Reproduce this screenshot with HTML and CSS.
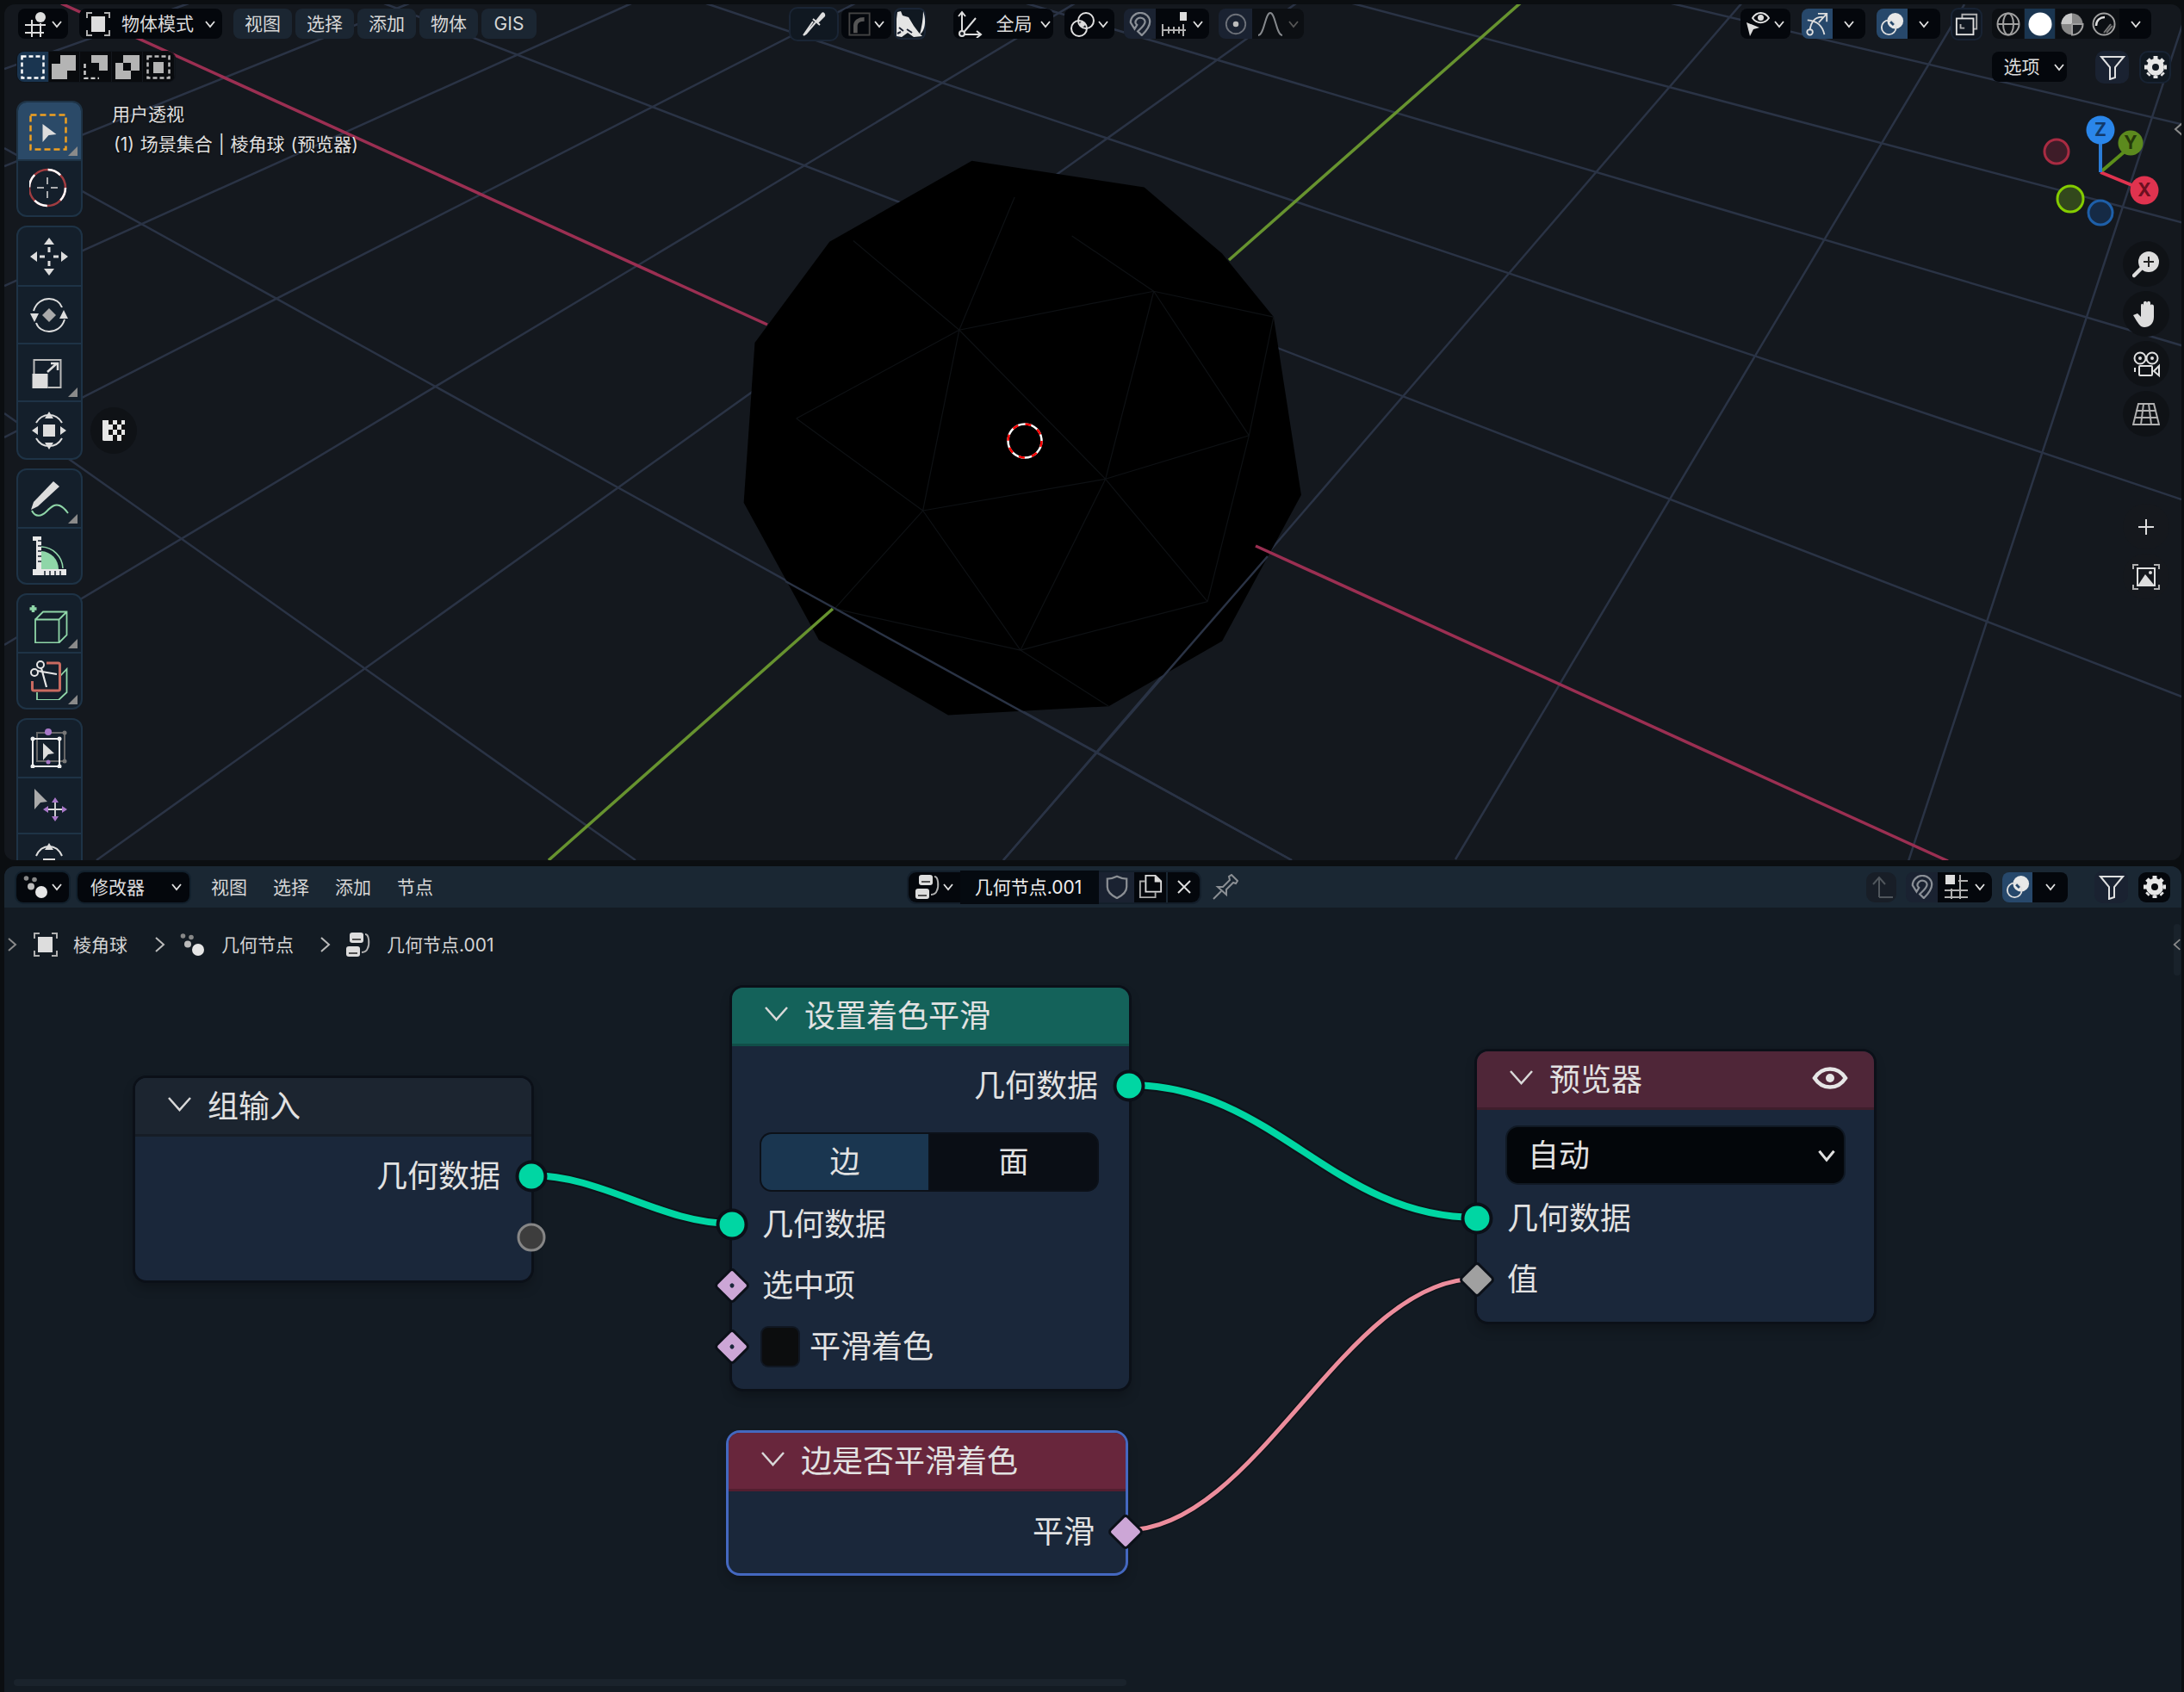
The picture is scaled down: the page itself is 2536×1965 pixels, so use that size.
FILE: index.html
```html
<!DOCTYPE html>
<html lang="zh">
<head>
<meta charset="utf-8">
<title>Blender</title>
<link rel="stylesheet" href="styles.css">
</head>
<body>
<div class="app">

<section class="viewport">
  <svg class="scene" viewBox="5 5 2528 994">
    <g class="grid">
      <path d="M5 80L219 4M5 193L475 4M5 332L733 4M5 508L993 4M5 749L1248 4M112 999L1505 4M1165 999L2023 3M1690 998L2281 5M2216 1000L2536 23"/>
      <path d="M446 4L2536 810M820 4L2536 581M1192 4L2536 402M1567 3L2536 259M1937 3L2536 145M5 172L1500 999M5 480L738 999"/>
    </g>
    <path class="axis-r" d="M71 4L891 377"/>
    <path class="axis-g" d="M1766 3L1427 302"/>
    <g transform="translate(820,150) scale(.4591)">
      <path class="ball" d="M672 80L1108 147L1305 315L1435 475L1505 925L1305 1295L1018 1460L612 1482L285 1292L95 945L123 540L312 285Z"/>
      <path class="facets" d="M372 282L640 508M780 172L640 508M640 508L1132 410M640 508L548 965M640 508L228 732M640 508L1010 885M1132 410L1010 885M1132 410L1435 475M1132 410L1373 775M1132 410L925 270M1010 885L548 965M1010 885L1373 775M1010 885L1268 1195M1010 885L795 1318M548 965L228 732M548 965L795 1318M548 965L325 1213M325 1213L795 1318M795 1318L1268 1195M795 1318L1018 1460M1373 775L1435 475M1373 775L1268 1195"/>
    </g>
    <path class="axis-r" d="M1458 634L2262 1000"/>
    <path class="axis-g" d="M967 707L637 999"/>
    <g class="grid"><path d="M1165 999L1472 646M912 675L1500 999"/></g>
    <circle class="cur-w" cx="1190" cy="512" r="19.5"/>
    <circle class="cur-r" cx="1190" cy="512" r="19.5"/>
  </svg>

  <header class="vp-row vp-top">
    <div class="seg w58"><button class="b dark"><svg class="i30" viewBox="0 0 30 30"><circle cx="20" cy="7" r="6" fill="#ddd"/><path d="M2 16H26M2 25H24M10 10V30M20 14V30" class="st2"/></svg><svg class="chev" viewBox="0 0 14 14"><path d="M2 4L7 10L12 4"/></svg></button></div>
    <div class="seg w166 ml13"><button class="b dark gap12"><svg class="i30" viewBox="0 0 30 30"><path d="M2 8V2H8M22 2H28V8M2 22V28H8M22 28H28V22" class="st2g"/><rect x="7" y="6" width="16" height="18" fill="#ddd"/></svg><span>物体模式</span><svg class="chev" viewBox="0 0 14 14"><path d="M2 4L7 10L12 4"/></svg></button></div>
    <nav class="menus ml13">
      <button class="menu w68">视图</button><button class="menu w68">选择</button><button class="menu w68">添加</button><button class="menu w68">物体</button><button class="menu w64">GIS</button>
    </nav>

    <div class="center-a">
      <button class="frame w58"><svg class="i30" viewBox="0 0 30 30"><path d="M17 11L24 2C26 0 29 3 28 6L20 14Z" fill="#ddd"/><path d="M14 9L22 16M17 13L6 26L3 28L5 25L14 12" class="st2"/></svg></button>
      <div class="seg w58 ml3"><button class="b dark"><svg class="i28" viewBox="0 0 28 30"><rect x="1.5" y="1.5" width="25" height="27" fill="none" stroke="#444" stroke-width="2"/><path d="M9 26V17C9 12 13 9 20 9" fill="none" stroke="#555" stroke-width="5"/></svg><svg class="chev" viewBox="0 0 14 14"><path d="M2 4L7 10L12 4"/></svg></button></div>
      <button class="frame2 w37 ml3"><svg class="i36" viewBox="0 0 36 32"><path d="M33 1C37 12 35 24 29 28C31 20 33 10 33 1Z" fill="#e8e8e8"/><path d="M3 2L7 1L9 6L16 8L22 18L28 26L32 30L22 31L15 26L8 31L2 30V10Z" fill="#e4e4e4"/><path d="M5 20L10 24M3 27L7 25M14 22L20 26" stroke="#1a2030" stroke-width="2" fill="none"/></svg></button>

      <div class="seg w116 ml32"><button class="b dark gap8"><svg class="i32 mr7" viewBox="0 0 32 32"><path d="M7 28V3M3 7L7 2L11 7M7 28H28M24 24L29 28L24 32M7 28L23 9" class="st2"/><circle cx="7" cy="27" r="3" fill="#14181e" stroke="#ddd" stroke-width="2"/></svg><span>全局</span><svg class="chev" viewBox="0 0 14 14"><path d="M2 4L7 10L12 4"/></svg></button></div>
      <div class="seg w58 ml13"><button class="b dark"><svg class="i30" viewBox="0 0 30 30"><circle cx="19" cy="11" r="9" class="st2n"/><circle cx="11" cy="20" r="9" class="st2n"/><circle cx="15" cy="15" r="3" fill="#ddd"/></svg><svg class="chev" viewBox="0 0 14 14"><path d="M2 4L7 10L12 4"/></svg></button></div>
      <div class="seg ml11">
        <button class="b slate w37"><svg class="i28" viewBox="0 0 30 30"><path d="M3 13C3 6 9 1 15 1C22 1 27 6 27 12C27 18 22 24 17 29L12 24C16 20 21 16 21 12C21 9 18 7 15 7C12 7 9 10 9 13C9 14 10 15 11 16L8 21Z" fill="none" stroke="#8a8f96" stroke-width="2.4"/></svg></button>
        <button class="b dark w62 gap5"><svg class="i30" viewBox="0 0 30 30"><rect x="21" y="1" width="8" height="10" fill="#ddd"/><path d="M1 15V29M25 15V29M1 22H28M8 18V26M14 18V26M20 18V26" class="st2g"/></svg><svg class="chev" viewBox="0 0 14 14"><path d="M2 4L7 10L12 4"/></svg></button>
      </div>
      <div class="seg ml11">
        <button class="b slate w39"><svg class="i28" viewBox="0 0 28 30"><circle cx="14" cy="15" r="12" fill="none" stroke="#6c7078" stroke-width="2"/><circle cx="14" cy="15" r="3.5" fill="#bbb"/></svg></button>
        <button class="b dim w60 gap5"><svg class="i30" viewBox="0 0 30 30"><path d="M1 28C8 28 9 2 15 2C21 2 22 28 29 28" fill="none" stroke="#85888c" stroke-width="2"/></svg><svg class="chev faint" viewBox="0 0 14 14"><path d="M2 4L7 10L12 4"/></svg></button>
      </div>
    </div>

    <div class="right-a">
      <div class="seg w58"><button class="b dark"><svg class="i30" viewBox="0 0 30 30"><path d="M8 8C13 0 22 0 27 8C22 15 13 15 8 8Z" class="st2n"/><circle cx="17.500" cy="7.500" r="3.500" fill="#ddd"/><path d="M1 13L16 19L9 21L5 29Z" fill="#ddd"/></svg><svg class="chev" viewBox="0 0 14 14"><path d="M2 4L7 10L12 4"/></svg></button></div>
      <div class="seg ml13">
        <button class="b on w36"><svg class="i28" viewBox="0 0 30 30"><path d="M6 23C7 13 12 6 22 6M16 2H27V12M27 2L17 13M24 28C22 18 16 11 3 10" class="st2"/><circle cx="6" cy="25" r="3.500" class="st2n"/></svg></button>
        <button class="b dark w38"><svg class="chev" viewBox="0 0 14 14"><path d="M2 4L7 10L12 4"/></svg></button>
      </div>
      <div class="seg ml13">
        <button class="b on w36"><svg class="i28" viewBox="0 0 30 30"><circle cx="19" cy="11" r="10" fill="#e8e8e8"/><circle cx="11" cy="19" r="9" fill="none" stroke="#e0e0e0" stroke-width="2"/><path d="M13 12L17 16" stroke="#27486b" stroke-width="3"/></svg></button>
        <button class="b dark w38"><svg class="chev" viewBox="0 0 14 14"><path d="M2 4L7 10L12 4"/></svg></button>
      </div>
      <button class="frame-t w37 ml12"><svg class="i28" viewBox="0 0 30 30"><path d="M9 8V3H27V21H23" class="st2g"/><rect x="2" y="8" width="21" height="20" class="st2n"/><path d="M7 15V20H12" class="st2g"/></svg></button>
      <div class="seg ml11">
        <button class="b dim w37"><svg class="i28" viewBox="0 0 28 28"><circle cx="14" cy="14" r="12.500" fill="none" stroke="#a0a0a0" stroke-width="2"/><ellipse cx="14" cy="14" rx="6" ry="12.500" fill="none" stroke="#a0a0a0" stroke-width="2"/><path d="M2 14H26" stroke="#a0a0a0" stroke-width="2"/></svg></button>
        <button class="b blue w35 sp1"><svg class="i28" viewBox="0 0 28 28"><circle cx="14" cy="14" r="13.500" fill="#fff"/></svg></button>
        <button class="b dim w37"><svg class="i28" viewBox="0 0 28 28"><circle cx="14" cy="14" r="12.500" fill="#888"/><path d="M14 1.500A12.500 12.500 0 0 0 1.500 14H14Z" fill="#c8c8c8"/><path d="M14 14V26.500A12.500 12.500 0 0 0 26.500 14Z" fill="#191c20" stroke="#a0a0a0" stroke-width="2"/></svg></button>
        <button class="b dim w37"><svg class="i28" viewBox="0 0 28 28"><circle cx="14" cy="14" r="12.500" fill="none" stroke="#a0a0a0" stroke-width="2"/><path d="M5 16C5 9 10 6 15 6" fill="none" stroke="#ddd" stroke-width="2.500"/><path d="M17 24L24 16M14 24L22 14" stroke="#777" stroke-width="2"/></svg></button>
        <button class="b dark w37"><svg class="chev" viewBox="0 0 14 14"><path d="M2 4L7 10L12 4"/></svg></button>
      </div>
    </div>
  </header>

  <div class="vp-row vp-second">
    <div class="seg modes">
      <button class="b mode sel"><svg class="i28" viewBox="0 0 28 28"><rect x="1.500" y="1.500" width="25" height="25" fill="none" stroke="#fff" stroke-width="2.500" stroke-dasharray="5 3"/></svg></button>
      <button class="b mode"><svg class="i28" viewBox="0 0 28 28"><path d="M10 0H28V18H18V28H0V10H10Z" fill="#b4b4b4"/></svg></button>
      <button class="b mode"><svg class="i28" viewBox="0 0 28 28"><path d="M9 0H28V18H18V9H9Z" fill="#b4b4b4"/><path d="M1.500 10V27H18" fill="none" stroke="#ccc" stroke-width="2.500" stroke-dasharray="5 3"/></svg></button>
      <button class="b mode"><svg class="i28" viewBox="0 0 28 28"><path d="M9 0H28V18H18V9H9Z" fill="#b4b4b4"/><path d="M0 9H9V18H18V28H0Z" fill="#b4b4b4"/></svg></button>
      <button class="b mode"><svg class="i28" viewBox="0 0 28 28"><rect x="1.500" y="1.500" width="25" height="25" fill="none" stroke="#bbb" stroke-width="2.500" stroke-dasharray="5 3"/><rect x="8" y="8" width="12" height="13" fill="#b4b4b4"/></svg></button>
    </div>
    <div class="vp-second-right">
      <div class="seg w87"><button class="b dark gap15 opts"><span>选项</span><svg class="chev" viewBox="0 0 14 14"><path d="M2 4L7 10L12 4"/></svg></button></div>
      <button class="square slate-sq w39 ml33"><svg class="i30" viewBox="0 0 30 30"><path d="M2 3H28L18 15V27L12 29V15Z" class="st2n"/></svg></button>
      <button class="square frame-d w37 ml12"><svg class="i30" viewBox="0 0 30 30"><circle cx="15" cy="15" r="7" fill="none" stroke="#e6e6e6" stroke-width="6"/><path d="M15 2V28M2 15H28M6 6L24 24M24 6L6 24" stroke="#e6e6e6" stroke-width="5" stroke-dasharray="5 18" stroke-dashoffset="0"/></svg></button>
    </div>
  </div>

  <aside class="tools">
    <div class="tgroup">
      <button class="cell active corner"><svg class="i46" viewBox="0 0 46 46"><rect x="1.500" y="4.500" width="41" height="40" fill="none" stroke="#f0a020" stroke-width="2.500" stroke-dasharray="7 4"/><path d="M15.500 15L31.500 27L22.500 28L15.500 36Z" fill="#ddd"/></svg></button>
      <button class="cell"><svg class="i46" viewBox="0 0 46 46"><circle cx="21" cy="23" r="21" fill="none" stroke="#a03c40" stroke-width="2.500"/><circle cx="21" cy="23" r="21" fill="none" stroke="#fff" stroke-width="2.500" stroke-dasharray="16 17"/><path d="M21 11V19M21 27V35M9 23H17M25 23H33" stroke="#ddd" stroke-width="1.500"/></svg></button>
    </div>
    <div class="tgroup">
      <button class="cell tall"><svg class="i46" viewBox="0 0 46 46"><path d="M23 1L29 9H17ZM23 45L29 37H17ZM1 23L9 17V29ZM45 23L37 17V29Z" fill="#ddd"/><path d="M23 12V18M23 28V34M12 23H18M28 23H34" stroke="#ddd" stroke-width="3"/></svg></button>
      <button class="cell tall"><svg class="i46" viewBox="0 0 46 46"><path d="M23 15L31 23L23 31L15 23Z" fill="#aaa"/><path d="M5 18C8 8 16 4 23 4C30 4 36 8 38 14M41 28C38 38 30 42 23 42C16 42 10 38 8 32" fill="none" stroke="#ddd" stroke-width="2"/><path d="M1 21H11L6 31ZM45 27H35L40 17Z" fill="#ddd"/></svg></button>
      <button class="cell tall corner"><svg class="i46" viewBox="0 0 46 46"><path d="M5.500 24V8H36.500V40H21.500" fill="none" stroke="#bbb" stroke-width="2"/><rect x="3.500" y="24" width="18" height="17" fill="#ddd"/><path d="M21 22L32 12M25 12H33V20" fill="none" stroke="#ddd" stroke-width="2.500"/></svg></button>
      <button class="cell tall"><svg class="i46" viewBox="0 0 46 46"><rect x="16" y="16" width="14" height="14" fill="#ddd"/><path d="M8 14C12 7 17 5 23 5C29 5 34 7 38 14M8 32C12 39 17 41 23 41C29 41 34 39 38 32" fill="none" stroke="#ddd" stroke-width="2"/><path d="M23 1L28 9H18ZM23 45L28 37H18ZM3 23L10 18V28ZM43 23L36 18V28Z" fill="#ddd"/></svg></button>
    </div>
    <div class="tgroup">
      <button class="cell corner"><svg class="i46" viewBox="0 0 46 46"><path d="M28 3L35 9L10 32L2 36L5 27Z" fill="#ddd"/><path d="M3 37C7 45 14 44 20 38C26 32 30 29 35 31C40 33 42 36 45 40" fill="none" stroke="#8fd6a8" stroke-width="2"/></svg></button>
      <button class="cell"><svg class="i46" viewBox="0 0 46 46"><path d="M14 18A21 21 0 0 1 34 39H14Z" fill="#8fd6a8"/><path d="M14 13A26 26 0 0 1 39 38" fill="none" stroke="#8fd6a8" stroke-width="1.500"/><path d="M4 1H14V39H43V46H4V39H8V6H4Z" fill="#e8e8e8"/><path d="M14 6H10M14 12H10M14 18H10M14 24H10M14 30H10M18 46V41M24 46V41M30 46V41M36 46V41" stroke="#141f2b" stroke-width="1.500"/></svg></button>
    </div>
    <div class="tgroup">
      <button class="cell corner"><svg class="i46" viewBox="0 0 46 46"><path d="M4.500 2V10M0.500 6H8.500" stroke="#8fd6a8" stroke-width="3.500"/><path d="M7 18.500H34.500V45.500H7ZM7 18.500L16 9.500H43.500V36.500L34.500 45.500M34.500 18.500L43.500 9.500" fill="none" stroke="#8fd6a8" stroke-width="1.800"/></svg></button>
      <button class="cell corner"><svg class="i46" viewBox="0 0 46 46"><path d="M36 18L43.500 10V37L34 46H9V37" fill="none" stroke="#8fd6a8" stroke-width="1.800"/><rect x="3.500" y="3" width="32" height="32" rx="2" fill="none" stroke="#c96a60" stroke-width="3"/><rect x="0" y="0" width="20" height="24" fill="#141f2b"/><circle cx="6" cy="14" r="4" fill="none" stroke="#e6e6e6" stroke-width="2"/><circle cx="13" cy="5" r="4" fill="none" stroke="#e6e6e6" stroke-width="2"/><path d="M9 12L32 16M14 9L20 31" stroke="#e6e6e6" stroke-width="2.200"/></svg></button>
    </div>
    <div class="tgroup cut">
      <button class="cell"><svg class="i46" viewBox="0 0 46 46"><path d="M9 5H41V38H9Z" fill="none" stroke="#666" stroke-width="2"/><path d="M4 12H35V44H4Z" fill="none" stroke="#eee" stroke-width="2"/><circle cx="22" cy="4" r="4" fill="#a878c8"/><circle cx="22" cy="39" r="2.500" fill="#a878c8"/><circle cx="4" cy="12" r="2.500" fill="#eee"/><circle cx="35" cy="12" r="2.500" fill="#eee"/><circle cx="4" cy="44" r="2.500" fill="#eee"/><circle cx="35" cy="44" r="2.500" fill="#eee"/><circle cx="41" cy="5" r="2.500" fill="#777"/><circle cx="41" cy="38" r="2.500" fill="#777"/><path d="M16 17L29 29L22 30L16 37Z" fill="#ddd"/></svg></button>
      <button class="cell"><svg class="i46" viewBox="0 0 46 46"><path d="M6 4L21 19L13 20L6 28Z" fill="#aaa"/><path d="M30 14L34 20H26ZM30 42L34 36H26ZM16 28L22 24V32ZM44 28L38 24V32Z" fill="#a878c8"/><path d="M30 20V36M22 28H38" stroke="#ddd" stroke-width="1.800"/></svg></button>
      <button class="cell"><svg class="i46" viewBox="0 0 46 46"><rect x="16" y="19" width="14" height="6" fill="#ddd"/><path d="M8 16C12 7 17 5 23 5C29 5 34 7 38 16" fill="none" stroke="#ddd" stroke-width="2"/><path d="M23 1L28 9H18Z" fill="#ddd"/></svg></button>
    </div>
  </aside>

  <div class="info">
    <p>用户透视</p>
    <p class="info2">(1) 场景集合 | 棱角球 (预览器)</p>
  </div>

  <button class="float checker"><svg class="i28" viewBox="0 0 28 26"><path d="M1 1H27V25H3C1 25 1 24 1 23Z" fill="#e6e6e6"/><path d="M8 1H13V6H8ZM18 1H23V6H18ZM13 6H18V12H13ZM23 6H27V12H23ZM8 12H13V18H8ZM18 12H23V18H18ZM13 18H18V25H13ZM23 18H27V25H23Z" fill="#111"/></svg></button>

  <svg class="gizmo" viewBox="2365 130 150 140">
    <circle cx="2388" cy="176" r="14" fill="#3e1c28" stroke="#a82b42" stroke-width="3"/>
    <circle cx="2404" cy="231" r="15" fill="#32481c" stroke="#84cc00" stroke-width="3"/>
    <circle cx="2439" cy="247" r="14" fill="#152a45" stroke="#1e5fa8" stroke-width="3"/>
    <path d="M2439 200L2474 170" stroke="#5c8f1a" stroke-width="4"/>
    <path d="M2439 200L2490 221" stroke="#e0334f" stroke-width="4"/>
    <path d="M2439 200V155" stroke="#2a7bd6" stroke-width="4"/>
    <circle cx="2439" cy="151" r="16.500" fill="#2a86ea"/>
    <circle cx="2474" cy="166" r="14.500" fill="#5c8a1e"/>
    <circle cx="2490" cy="221" r="16.500" fill="#e0334f"/>
    <text class="gz" x="2439" y="158" fill="#123a6a">Z</text>
    <text class="gz" x="2474" y="173" fill="#24380a">Y</text>
    <text class="gz" x="2490" y="228" fill="#6c0f20">X</text>
  </svg>

  <svg class="side-arrow sa-top" viewBox="0 0 12 18"><path d="M10 2L2 9L10 16"/></svg>

  <div class="navs">
    <div class="nav-group">
      <button class="float nav"><svg class="i32" viewBox="0 0 32 32"><circle cx="19" cy="13" r="12" fill="#ddd"/><path d="M19 7V19M13 13H25" stroke="#222" stroke-width="2"/><path d="M10 21L2 29" stroke="#ddd" stroke-width="4.500" stroke-linecap="round"/></svg></button>
      <button class="float nav"><svg class="i32" viewBox="0 0 32 32"><path d="M1 17L6 15L10 19V6C10 3 13 3 13 6V3C13 0 17 0 17 3V3C17 0 21 0 21 3V6C21 4 25 4 25 7V19C25 27 20 31 14 31C9 31 7 27 1 17Z" fill="#ddd"/></svg></button>
      <button class="float nav"><svg class="i32" viewBox="0 0 32 32"><circle cx="9" cy="9" r="6.500" class="st2n"/><circle cx="23" cy="9" r="6.500" class="st2n"/><circle cx="9" cy="9" r="2" fill="#ddd"/><circle cx="23" cy="9" r="2" fill="#ddd"/><rect x="8" y="18" width="15" height="11" rx="1" class="st2n"/><path d="M3 20V25M31 18V29L25 24Z" class="st2n"/></svg></button>
      <button class="float nav"><svg class="i32" viewBox="0 0 32 32"><path d="M7 4H25L31 28H1ZM2 20H30M4 12H28M13 4L10 28M19 4L22 28" class="st2g"/></svg></button>
    </div>
    <div class="nav-group low">
      <button class="float nav soft"><svg class="i22" viewBox="0 0 22 22"><path d="M11 2V20M2 11H20" stroke="#ddd" stroke-width="2"/></svg></button>
      <button class="float nav soft"><svg class="i32" viewBox="0 0 32 32"><path d="M1 7V2H7M25 2H31V7M1 25V30H7M25 30H31V25" class="st2g"/><rect x="6" y="6" width="20" height="20" class="st2n"/><path d="M7 25L15 13L20 19L25 25Z" fill="#ddd"/><circle cx="21" cy="11" r="2" fill="#ddd"/></svg></button>
    </div>
  </div>
</section>

<section class="editor">
  <svg class="wires" viewBox="5 1006 2528 959">
    <path class="w-out w-g" d="M617 1365C700 1365 767 1421 850 1421"/>
    <path class="w-out w-g" d="M1311 1260C1480 1260 1546 1414 1715 1414"/>
    <path class="w-out w-p" d="M1307 1777C1460 1777 1561 1485 1715 1485"/>
    <path class="w-teal" d="M617 1365C700 1365 767 1421 850 1421"/>
    <path class="w-teal" d="M1311 1260C1480 1260 1546 1414 1715 1414"/>
    <path class="w-pink" d="M1307 1777C1460 1777 1561 1485 1715 1485"/>
  </svg>

  <header class="ed-head">
    <div class="seg bordered w61"><button class="b dark"><svg class="i30" viewBox="0 0 30 28"><circle cx="3.500" cy="4" r="2.800" fill="#888"/><circle cx="13" cy="5.500" r="2.800" fill="#888"/><circle cx="9" cy="13.500" r="4" fill="#bbb"/><circle cx="21" cy="20" r="7" fill="#e6e6e6"/></svg><svg class="chev" viewBox="0 0 14 14"><path d="M2 4L7 10L12 4"/></svg></button></div>
    <div class="seg bordered w130 ml10"><button class="b dark spread"><span>修改器</span><svg class="chev" viewBox="0 0 14 14"><path d="M2 4L7 10L12 4"/></svg></button></div>
    <nav class="ed-menus">
      <span>视图</span><span>选择</span><span>添加</span><span>节点</span>
    </nav>

    <div class="datablock">
      <button class="b dark w60 rl"><svg class="i30" viewBox="0 0 30 30"><rect x="5" y="1" width="16" height="12" rx="3" fill="#ddd"/><rect x="1" y="17" width="16" height="12" rx="3" fill="#ddd"/><path d="M8 9H18M4 25H14" stroke="#222" stroke-width="1.600"/><path d="M23 3C28 3 28 15 26 19C25 22 22 24 19 24" class="st2g"/></svg><svg class="chev" viewBox="0 0 14 14"><path d="M2 4L7 10L12 4"/></svg></button>
      <div class="name">几何节点.001</div>
      <button class="b slate w41"><svg class="i28" viewBox="0 0 28 30"><path d="M14 2C18 4 22 5 26 5V15C26 22 20 26 14 29C8 26 2 22 2 15V5C6 5 10 4 14 2Z" fill="none" stroke="#8b8f94" stroke-width="2.400"/></svg></button>
      <button class="b dark w37 sepr"><svg class="i28" viewBox="0 0 28 30"><path d="M7 8H1V28H20V22" fill="none" stroke="#aaa" stroke-width="2"/><path d="M8 1H20L27 8V21H8Z" fill="none" stroke="#ddd" stroke-width="2"/><path d="M19 1V9H27" fill="#ddd"/></svg></button>
      <button class="b dark w37 rr"><svg class="i18" viewBox="0 0 18 18"><path d="M2 2L16 16M16 2L2 16" stroke="#ddd" stroke-width="2"/></svg></button>
    </div>
    <svg class="i30 pin" viewBox="0 0 30 30"><path d="M1 29L10 20M6 15L12 15L20 7L19 3L22 1L29 8L27 11L24 10L16 18L16 24Z" fill="none" stroke="#8b8f94" stroke-width="2"/></svg>

    <div class="ed-right">
      <button class="square parent w35"><svg class="i28" viewBox="0 0 28 28"><path d="M11 26V4M4 11L11 3L18 11M11 26H27" fill="none" stroke="#50565c" stroke-width="2"/></svg></button>
      <div class="seg ml11">
        <button class="b slate w37"><svg class="i28" viewBox="0 0 30 30"><path d="M3 13C3 6 9 1 15 1C22 1 27 6 27 12C27 18 22 24 17 29L12 24C16 20 21 16 21 12C21 9 18 7 15 7C12 7 9 10 9 13C9 14 10 15 11 16L8 21Z" fill="none" stroke="#8a8f96" stroke-width="2.4"/></svg></button>
        <button class="b dark w63 rr gap5"><svg class="i30" viewBox="0 0 30 30"><rect x="2" y="1" width="11" height="11" fill="#ddd"/><path d="M1 19H28M1 27H28M19 1V29M9 17V29M17 8H28" class="st2g"/></svg><svg class="chev" viewBox="0 0 14 14"><path d="M2 4L7 10L12 4"/></svg></button>
      </div>
      <div class="seg ml12">
        <button class="b on w35"><svg class="i28" viewBox="0 0 30 30"><circle cx="19" cy="11" r="10" fill="#e8e8e8"/><circle cx="11" cy="19" r="9" fill="none" stroke="#e0e0e0" stroke-width="2"/><path d="M13 12L17 16" stroke="#27486b" stroke-width="3"/></svg></button>
        <button class="b dark w41 sepl"><svg class="chev" viewBox="0 0 14 14"><path d="M2 4L7 10L12 4"/></svg></button>
      </div>
      <button class="square slate-sq w39 ml31"><svg class="i30" viewBox="0 0 30 30"><path d="M2 3H28L18 15V27L12 29V15Z" class="st2n"/></svg></button>
      <button class="square solid-d w37 ml12"><svg class="i30" viewBox="0 0 30 30"><circle cx="15" cy="15" r="7" fill="none" stroke="#e6e6e6" stroke-width="6"/><path d="M15 2V28M2 15H28M6 6L24 24M24 6L6 24" stroke="#e6e6e6" stroke-width="5" stroke-dasharray="5 18"/></svg></button>
    </div>
  </header>

  <div class="crumbs">
    <svg class="side-arrow sa-left" viewBox="0 0 12 18"><path d="M2 2L10 9L2 16"/></svg>
    <svg class="i30 c-obj" viewBox="0 0 30 30"><path d="M2 8V2H8M22 2H28V8M2 22V28H8M22 28H28V22" class="st2g"/><rect x="6" y="6" width="17" height="18" fill="#ddd"/></svg>
    <span class="c-t1">棱角球</span>
    <svg class="crumb-sep s1" viewBox="0 0 14 20"><path d="M2 2L11 10L2 18"/></svg>
    <svg class="i30 c-nodes" viewBox="0 0 30 28"><circle cx="3.500" cy="4" r="2.800" fill="#888"/><circle cx="13" cy="5.500" r="2.800" fill="#888"/><circle cx="9" cy="13.500" r="4" fill="#bbb"/><circle cx="21" cy="20" r="7" fill="#e6e6e6"/></svg>
    <span class="c-t2">几何节点</span>
    <svg class="crumb-sep s2" viewBox="0 0 14 20"><path d="M2 2L11 10L2 18"/></svg>
    <svg class="i30 c-tree" viewBox="0 0 30 30"><rect x="5" y="1" width="16" height="12" rx="3" fill="#ddd"/><rect x="1" y="17" width="16" height="12" rx="3" fill="#ddd"/><path d="M8 9H18M4 25H14" stroke="#222" stroke-width="1.600"/><path d="M23 3C28 3 28 15 26 19C25 22 22 24 19 24" class="st2g"/></svg>
    <span class="c-t3">几何节点.001</span>
  </div>

  <div class="scroll-h"></div>
  <div class="scroll-v"></div>
  <svg class="side-arrow sa-ed" viewBox="0 0 12 18"><path d="M10 2L2 9L10 16"/></svg>

  <article class="node n-group">
    <h3 class="nh h-group"><svg class="nchev" viewBox="0 0 29 18"><path d="M2 2L14.500 16L27 2"/></svg><span>组输入</span></h3>
    <div class="nb pt10 pb15">
      <div class="row right">几何数据<i class="sock geo at-r"></i></div>
      <div class="row"><i class="sock empty at-r"></i></div>
    </div>
  </article>

  <article class="node n-shade">
    <h3 class="nh h-teal"><svg class="nchev" viewBox="0 0 29 18"><path d="M2 2L14.500 16L27 2"/></svg><span>设置着色平滑</span></h3>
    <div class="nb pt10 pb14">
      <div class="row right">几何数据<i class="sock geo at-r"></i></div>
      <div class="toggle"><span class="tg on-e">边</span><span class="tg">面</span></div>
      <div class="row left">几何数据<i class="sock geo at-l"></i></div>
      <div class="row left">选中项<i class="sock dia dot at-l"></i></div>
      <div class="row left"><b class="check"></b>平滑着色<i class="sock dia dot at-l"></i></div>
    </div>
  </article>

  <article class="node n-edge">
    <h3 class="nh h-red"><svg class="nchev" viewBox="0 0 29 18"><path d="M2 2L14.500 16L27 2"/></svg><span>边是否平滑着色</span></h3>
    <div class="nb pt11 pb13">
      <div class="row right">平滑<i class="sock dia at-r"></i></div>
    </div>
  </article>

  <article class="node n-view">
    <h3 class="nh h-wine"><svg class="nchev" viewBox="0 0 29 18"><path d="M2 2L14.500 16L27 2"/></svg><span>预览器</span>
      <svg class="eye" viewBox="0 0 42 30"><path d="M3 15C12 1 30 1 39 15C30 29 12 29 3 15Z" fill="none" stroke="#e6e6e6" stroke-width="4.500"/><circle cx="21" cy="15" r="5" fill="#e6e6e6"/></svg></h3>
    <div class="nb pt20 pb14">
      <div class="dropdown"><span>自动</span><svg class="chev big" viewBox="0 0 14 14"><path d="M2 4L7 10L12 4"/></svg></div>
      <div class="row left">几何数据<i class="sock geo at-l"></i></div>
      <div class="row left">值<i class="sock dia grey at-l"></i></div>
    </div>
  </article>
</section>
</div>
</body>
</html>
```
FILE: styles.css
```css
*{box-sizing:border-box}
html,body{margin:0;padding:0}
body{width:2536px;height:1965px;overflow:hidden;background:#0b0e11;color:#dcdcdc;font-family:Inter,"Noto Sans CJK SC",sans-serif;font-size:21px;line-height:1}
button{font:inherit;color:inherit;border:0;padding:0;background:none}
svg{display:block;flex:none}
p,h3{margin:0}
.app{display:flex;flex-direction:column;gap:7px;height:1965px;padding:5px 3px 0 5px}

/* icon sizes */
.i18{width:18px;height:18px}.i22{width:22px;height:22px}.i28{width:28px;height:28px}.i30{width:30px;height:30px}.i32{width:32px;height:32px}.i36{width:36px;height:32px}.i46{width:46px;height:46px}

.st2{fill:none;stroke:#ddd;stroke-width:2}
.st2n{fill:none;stroke:#e0e0e0;stroke-width:2}
.st2g{fill:none;stroke:#b0b0b0;stroke-width:2}
.chev{width:14px;height:14px;fill:none;stroke:#e0e0e0;stroke-width:1.800}
.chev.faint{stroke:#555}
.chev.big{width:24px;height:24px;stroke-width:1.800}

/* viewport */
.viewport{position:relative;flex:none;height:994px;background:#14181e;border-radius:12px;overflow:hidden}
.scene{position:absolute;inset:0;width:100%;height:100%}
.grid path{fill:none;stroke:#2a3345;stroke-width:2.500}
.axis-r{fill:none;stroke:#9b2f52;stroke-width:3.500}
.axis-g{fill:none;stroke:#67932f;stroke-width:3.500}
.ball{fill:#000}
.facets{fill:none;stroke:#0e1114;stroke-width:2.600}
.cur-w{fill:none;stroke:#fff;stroke-width:2.500}
.cur-r{fill:none;stroke:#f00;stroke-width:2.500;stroke-dasharray:7 8.300}

.vp-row{position:relative;display:flex;align-items:center;padding-left:16px}
.vp-top{height:35px;margin-top:5px}
.vp-second{height:35px;margin-top:15px;padding-left:15px;padding-right:12px}
.vp-second-right{display:flex;align-items:center;margin-left:auto}
.center-a{display:flex;align-items:center;margin-left:293px}
.right-a{display:flex;align-items:center;margin-left:507px}

.seg{display:flex;height:35px;border-radius:8px;overflow:hidden;flex:none}
.seg.bordered{box-shadow:0 0 0 2px #12202c}
.b{display:flex;align-items:center;justify-content:center;height:100%;gap:2px;flex:1 1 auto}
.dark{background:#04070c}
.dim{background:#0c0f13}
.slate{background:#1a2231}
.on{background:#27486b}
.blue{background:#1a3550}
.spread{justify-content:space-between;padding:0 8px 0 15px}
.opts{padding-left:11px}
.sp1{margin:0 1px}
.menus{display:flex;gap:4px}
.menu{height:35px;border-radius:8px;background:#1b2632;color:#d6d6d6;flex:none}
.frame{display:flex;align-items:center;justify-content:center;height:40px;background:#101821;border:2px solid #1a2535;border-radius:10px;flex:none}
.frame2{display:flex;align-items:center;justify-content:center;height:37px;background:#101821;border:2px solid #1a2535;border-radius:8px;flex:none}
.frame-t{display:flex;align-items:center;justify-content:center;height:38px;background:#0f1620;border:2px solid #182333;border-radius:9px;flex:none}
.modes{box-shadow:0 0 0 1px #0f141a}
.mode{flex:none;width:36.600px;background:#090b0e;border-right:1px solid #14181e}
.mode.sel{background:#1a3550}
.square{display:flex;align-items:center;justify-content:center;height:38px;border-radius:10px;flex:none}
.slate-sq{background:#1a2231}
.frame-d{background:#101821;border:2px solid #182333}
.solid-d{height:35px;background:#04070c;border-radius:9px}
.parent{height:35px;background:#181e27}

/* widths and spacing */
.w35{flex:none;width:35px}.w36{flex:none;width:36px}.w37{flex:none;width:37px}.w38{flex:none;width:38px}.w39{flex:none;width:39px}.w41{flex:none;width:41px}.w58{flex:none;width:58px}.w60{flex:none;width:60px}.w61{flex:none;width:61px}.w62{flex:none;width:62px}.w63{flex:none;width:63px}.w64{flex:none;width:64px}.w68{flex:none;width:68px}.w87{flex:none;width:87px}.w116{flex:none;width:116px}.w130{flex:none;width:130px}.w166{flex:none;width:166px}
.ml3{margin-left:3px}.ml10{margin-left:10px}.ml11{margin-left:11px}.ml12{margin-left:12px}.ml13{margin-left:13px}.ml31{margin-left:31px}.ml32{margin-left:32px}.ml33{margin-left:33px}.mr7{margin-right:7px}
.gap5{gap:5px}.gap8{gap:8px}.gap12{gap:12px}.gap15{gap:15px}

.tools{position:relative;display:flex;flex-direction:column;gap:10px;width:77px;margin:22px 0 0 14px}
.tgroup{display:flex;flex-direction:column;border:2px solid #1e3346;border-radius:12px;overflow:hidden;background:#141f2b}
.cell{position:relative;display:flex;align-items:center;justify-content:center;height:65.500px;padding-right:1px;border-top:2px solid #1e3346;flex:none}
.cell:first-child{border-top:0}
.cell.tall{height:67px}
.cell.active{background:#2b4a68}
.corner::after{content:"";position:absolute;right:4px;bottom:4px;border-style:solid;border-width:0 0 11px 11px;border-color:transparent transparent #8a8a8a transparent}

.info{position:absolute;left:125px;top:117px;color:#e0e0e0;text-shadow:0 1px 2px #000}
.info p{height:35px;line-height:22px}
.info2{margin-left:2px;word-spacing:1px}

.float{display:flex;align-items:center;justify-content:center;flex:none}
.checker{position:absolute;left:100px;top:468px;width:54px;height:54px;border-radius:50%;background:#0f1216}
.gizmo{position:absolute;left:2360px;top:125px;width:150px;height:140px}
.gz{font-size:21px;font-weight:700;text-anchor:middle}
.side-arrow{fill:none;stroke:#8a8a8a;stroke-width:2;position:absolute}
.sa-top{left:2519px;top:136px;width:12px;height:18px}
.navs{position:absolute;top:275px;right:14px;display:flex;flex-direction:column}
.nav-group{display:flex;flex-direction:column;gap:5px}
.nav-group.low{margin-top:78px}
.nav{width:54px;height:53px;border-radius:50%;background:#0f1216}
.nav.soft{background:#15181d}

/* node editor */
.editor{position:relative;flex:1;background:#131b23;border-radius:12px 12px 0 0;overflow:hidden}
.wires{position:absolute;inset:0;width:100%;height:100%}
.w-out{fill:none;stroke:#0d1319}
.w-g{stroke-width:12}
.w-p{stroke-width:8}
.w-teal{fill:none;stroke:#00d6a3;stroke-width:8}
.w-pink{fill:none;stroke:#ec8d9c;stroke-width:5}

.ed-head{position:relative;display:flex;align-items:center;height:48px;padding:0 13px 0 14px;background:#1a2733}
.ed-menus{display:flex;gap:30px;margin-left:25px;color:#d6d6d6}
.datablock{display:flex;align-items:stretch;height:35px;margin-left:552px;border-radius:9px;box-shadow:0 0 0 2px #131e2a}
.rl{border-radius:9px 0 0 9px}
.rr{border-radius:0 9px 9px 0}
.sepr{margin-right:2px}
.name{display:flex;align-items:center;justify-content:center;flex:none;width:161px;margin:-2px 0;padding-right:3px;white-space:nowrap;background:#050a10;color:#eee}
.pin{margin-left:15px}
.ed-right{display:flex;align-items:center;margin-left:auto}

.crumbs{position:relative;display:flex;align-items:center;height:64px;margin-top:11px;color:#d4d4d4}
.sa-left{left:3px;top:23px;width:12px;height:18px}
.sa-ed{left:2518px;top:83px;width:10px;height:16px}
.c-obj{margin-left:33px}
.c-t1{margin-left:17px}
.crumb-sep{width:14px;height:20px;fill:none;stroke:#bbb;stroke-width:2}
.s1{margin-left:31px}
.c-nodes{margin-left:16px}
.c-t2{margin-left:18px}
.s2{margin-left:30px}
.c-tree{margin-left:16px}
.c-t3{margin-left:18px}

.node{position:absolute;border-radius:13px;background:#1a273a;box-shadow:0 0 0 3px #0b1018,0 8px 14px rgba(0,0,0,.28);font-size:36px;color:#e2e2e2}
.n-group{left:152px;top:246px;width:460px}
.n-shade{left:845px;top:141px;width:461px}
.n-edge{left:841px;top:658px;width:461px;box-shadow:0 0 0 3px #4468c0,0 8px 14px rgba(0,0,0,.28)}
.n-view{left:1710px;top:215px;width:461px}
.nh{position:relative;display:flex;align-items:center;height:68px;padding-left:37px;gap:18px;font-size:36px;font-weight:400;border-radius:13px 13px 0 0;border-bottom:3px solid rgba(0,0,0,.2)}
.h-group{background:#1c2530}
.h-teal{background:#14625a}
.h-red{background:#68263c}
.h-wine{background:#4f2638}
.nchev{width:29px;height:18px;fill:none;stroke:#d8d8d8;stroke-width:2.500;margin-top:-6px}
.eye{position:absolute;right:30px;top:16px;width:42px;height:30px}
.nb{display:flex;flex-direction:column;border-radius:0 0 13px 13px}
.pt10{padding-top:10px}.pt11{padding-top:11px}.pt20{padding-top:20px}.pb13{padding-bottom:13px}.pb14{padding-bottom:14px}.pb15{padding-bottom:15px}
.row{position:relative;display:flex;align-items:center;height:71px;flex:none}
.row.right{justify-content:flex-end;padding-right:36px}
.row.left{padding-left:35px}
.toggle{display:flex;height:65px;margin:21px 37px 4px 34px;border-radius:12px;overflow:hidden;box-shadow:0 0 0 2px #0c1119;background:#0a0e15}
.tg{flex:1;display:flex;align-items:center;justify-content:center;font-size:35px}
.on-e{background:#1a3650;border-right:2px solid #0c1119}
.check{width:42px;height:44px;margin-right:13px;border-radius:7px;background:#0c0d0e;box-shadow:0 0 0 2px #101722}
.dropdown{display:flex;align-items:center;justify-content:space-between;height:65px;margin:0 35px 5px 35px;padding:0 8px 0 24px;border-radius:13px;background:#03060a;box-shadow:0 0 0 2px #101924}

.sock{position:absolute;top:50%;display:block}
.sock.at-r{right:0;transform:translate(50%,-50%)}
.sock.at-l{left:0;transform:translate(-50%,-50%)}
.geo{width:29px;height:29px;border-radius:50%;background:#00d6a3;box-shadow:0 0 0 4px #0b1018}
.empty{width:33px;height:33px;border-radius:50%;background:#3d3d3d;border:3px solid #868686}
.dia{width:25px;height:25px;background:#cca6d6;box-shadow:0 0 0 3px #0b1018;border-radius:2px}
.sock.dia.at-r{transform:translate(50%,-50%) rotate(45deg)}
.sock.dia.at-l{transform:translate(-50%,-50%) rotate(45deg)}
.grey{background:#a0a0a0}
.dot::after{content:"";position:absolute;left:10px;top:10px;width:5px;height:5px;border-radius:50%;background:#1a273a}

.scroll-h{position:absolute;left:11px;bottom:7px;width:1292px;height:8px;border-radius:4px;background:#1a232c}
.scroll-v{position:absolute;right:1px;top:67px;width:8px;height:60px;border-radius:4px;background:#19222b}
```
